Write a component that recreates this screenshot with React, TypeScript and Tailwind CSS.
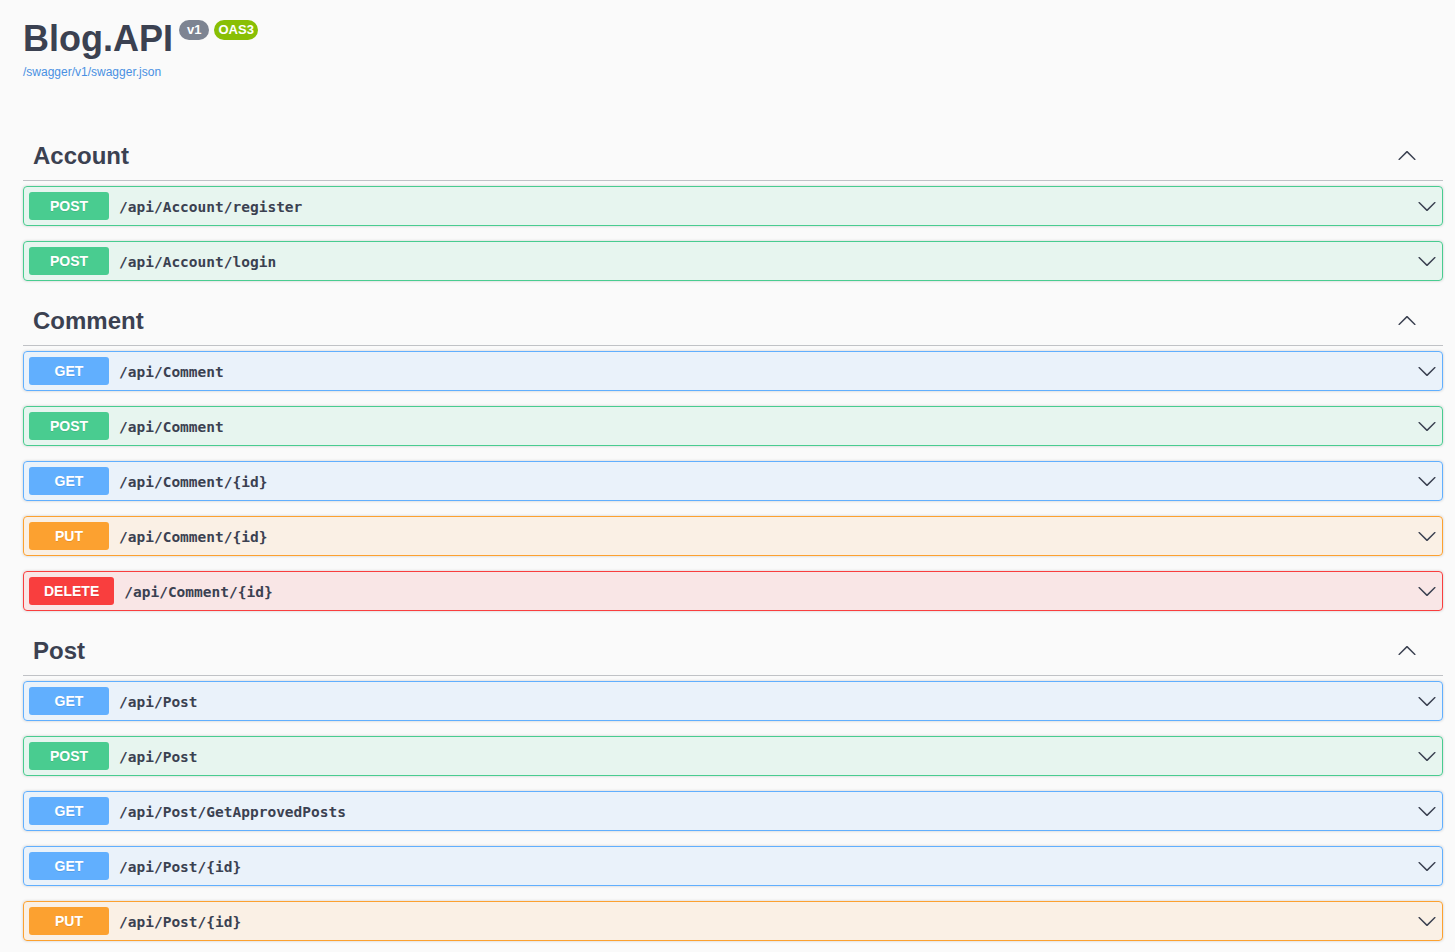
type Method = "GET" | "POST" | "PUT" | "DELETE";

type Op = { method: Method; path: string };

const SECTIONS: { tag: string; ops: Op[] }[] = [
  {
    tag: "Account",
    ops: [
      { method: "POST", path: "/api/Account/register" },
      { method: "POST", path: "/api/Account/login" },
    ],
  },
  {
    tag: "Comment",
    ops: [
      { method: "GET", path: "/api/Comment" },
      { method: "POST", path: "/api/Comment" },
      { method: "GET", path: "/api/Comment/{id}" },
      { method: "PUT", path: "/api/Comment/{id}" },
      { method: "DELETE", path: "/api/Comment/{id}" },
    ],
  },
  {
    tag: "Post",
    ops: [
      { method: "GET", path: "/api/Post" },
      { method: "POST", path: "/api/Post" },
      { method: "GET", path: "/api/Post/GetApprovedPosts" },
      { method: "GET", path: "/api/Post/{id}" },
      { method: "PUT", path: "/api/Post/{id}" },
      { method: "DELETE", path: "/api/Post/{id}" },
    ],
  },
];

const BLOCK: Record<Method, string> = {
  GET: "border-[#61affe] bg-[#61affe]/10",
  POST: "border-[#49cc90] bg-[#49cc90]/10",
  PUT: "border-[#fca130] bg-[#fca130]/10",
  DELETE: "border-[#f93e3e] bg-[#f93e3e]/10",
};

const BADGE: Record<Method, string> = {
  GET: "bg-[#61affe]",
  POST: "bg-[#49cc90]",
  PUT: "bg-[#fca130]",
  DELETE: "bg-[#f93e3e]",
};

function Arrow({ up = false }: { up?: boolean }) {
  return (
    <svg
      width="20"
      height="20"
      viewBox="0 0 20 20"
      className={up ? "rotate-180 shrink-0" : "shrink-0"}
      fill="#3b4151"
    >
      <path d="M17.418 6.109c.272-.268.709-.268.979 0s.271.701 0 .969l-7.908 7.83c-.27.268-.707.268-.979 0l-7.908-7.83c-.27-.268-.27-.701 0-.969.271-.268.709-.268.979 0L10 13.25l7.418-7.141z" />
    </svg>
  );
}

function OpBlock({ op }: { op: Op }) {
  return (
    <div
      className={`mb-[15px] flex items-center rounded-[4px] border p-[5px] shadow-[0_0_3px_rgba(0,0,0,0.19)] ${BLOCK[op.method]}`}
    >
      <span
        className={`min-w-[80px] rounded-[3px] px-[15px] py-[6px] text-center text-[14px] font-bold leading-[16px] text-white [text-shadow:0_1px_0_rgba(0,0,0,0.1)] ${BADGE[op.method]}`}
      >
        {op.method}
      </span>
      <span className="px-[10px] pt-[3px] font-['DejaVu_Sans_Mono',monospace] text-[14.5px] font-bold text-[#3b4151]">
        {op.path}
      </span>
      <div className="ml-auto flex">
        <Arrow />
      </div>
    </div>
  );
}

export default function App() {
  return (
    <div className="min-h-screen bg-[#fafafa] pl-[23px] pr-[12px] font-['Liberation_Sans',Arial,sans-serif] text-[#3b4151]">
      {/* Info header */}
      <div className="pt-[18px]">
        <div className="flex items-start">
          <h1 className="text-[36px] font-bold leading-[41px]">Blog.API</h1>
          <span className="ml-[6px] mt-[2px] rounded-full bg-[#7d8492] px-[8px] text-[13px] font-bold leading-[20px] text-white">
            v1
          </span>
          <span className="ml-[5px] mt-[2px] rounded-full bg-[#89bf04] px-[4px] text-[13px] font-bold leading-[20px] text-white">
            OAS3
          </span>
        </div>
        <a className="mt-[6px] block text-[12px] leading-[14px] text-[#4990e2]">/swagger/v1/swagger.json</a>
      </div>

      <div className="mt-[52px]">
        {SECTIONS.map((s) => (
          <div key={s.tag}>
            <div className="mb-[5px] flex items-center border-b border-[#3b4151]/30 py-[10px] pl-[10px] pr-[26px]">
              <h3 className="text-[24px] font-bold leading-[29px]">{s.tag}</h3>
              <div className="ml-auto flex">
                <Arrow up />
              </div>
            </div>
            {s.ops.map((op, i) => (
              <OpBlock key={i} op={op} />
            ))}
          </div>
        ))}
      </div>
    </div>
  );
}
